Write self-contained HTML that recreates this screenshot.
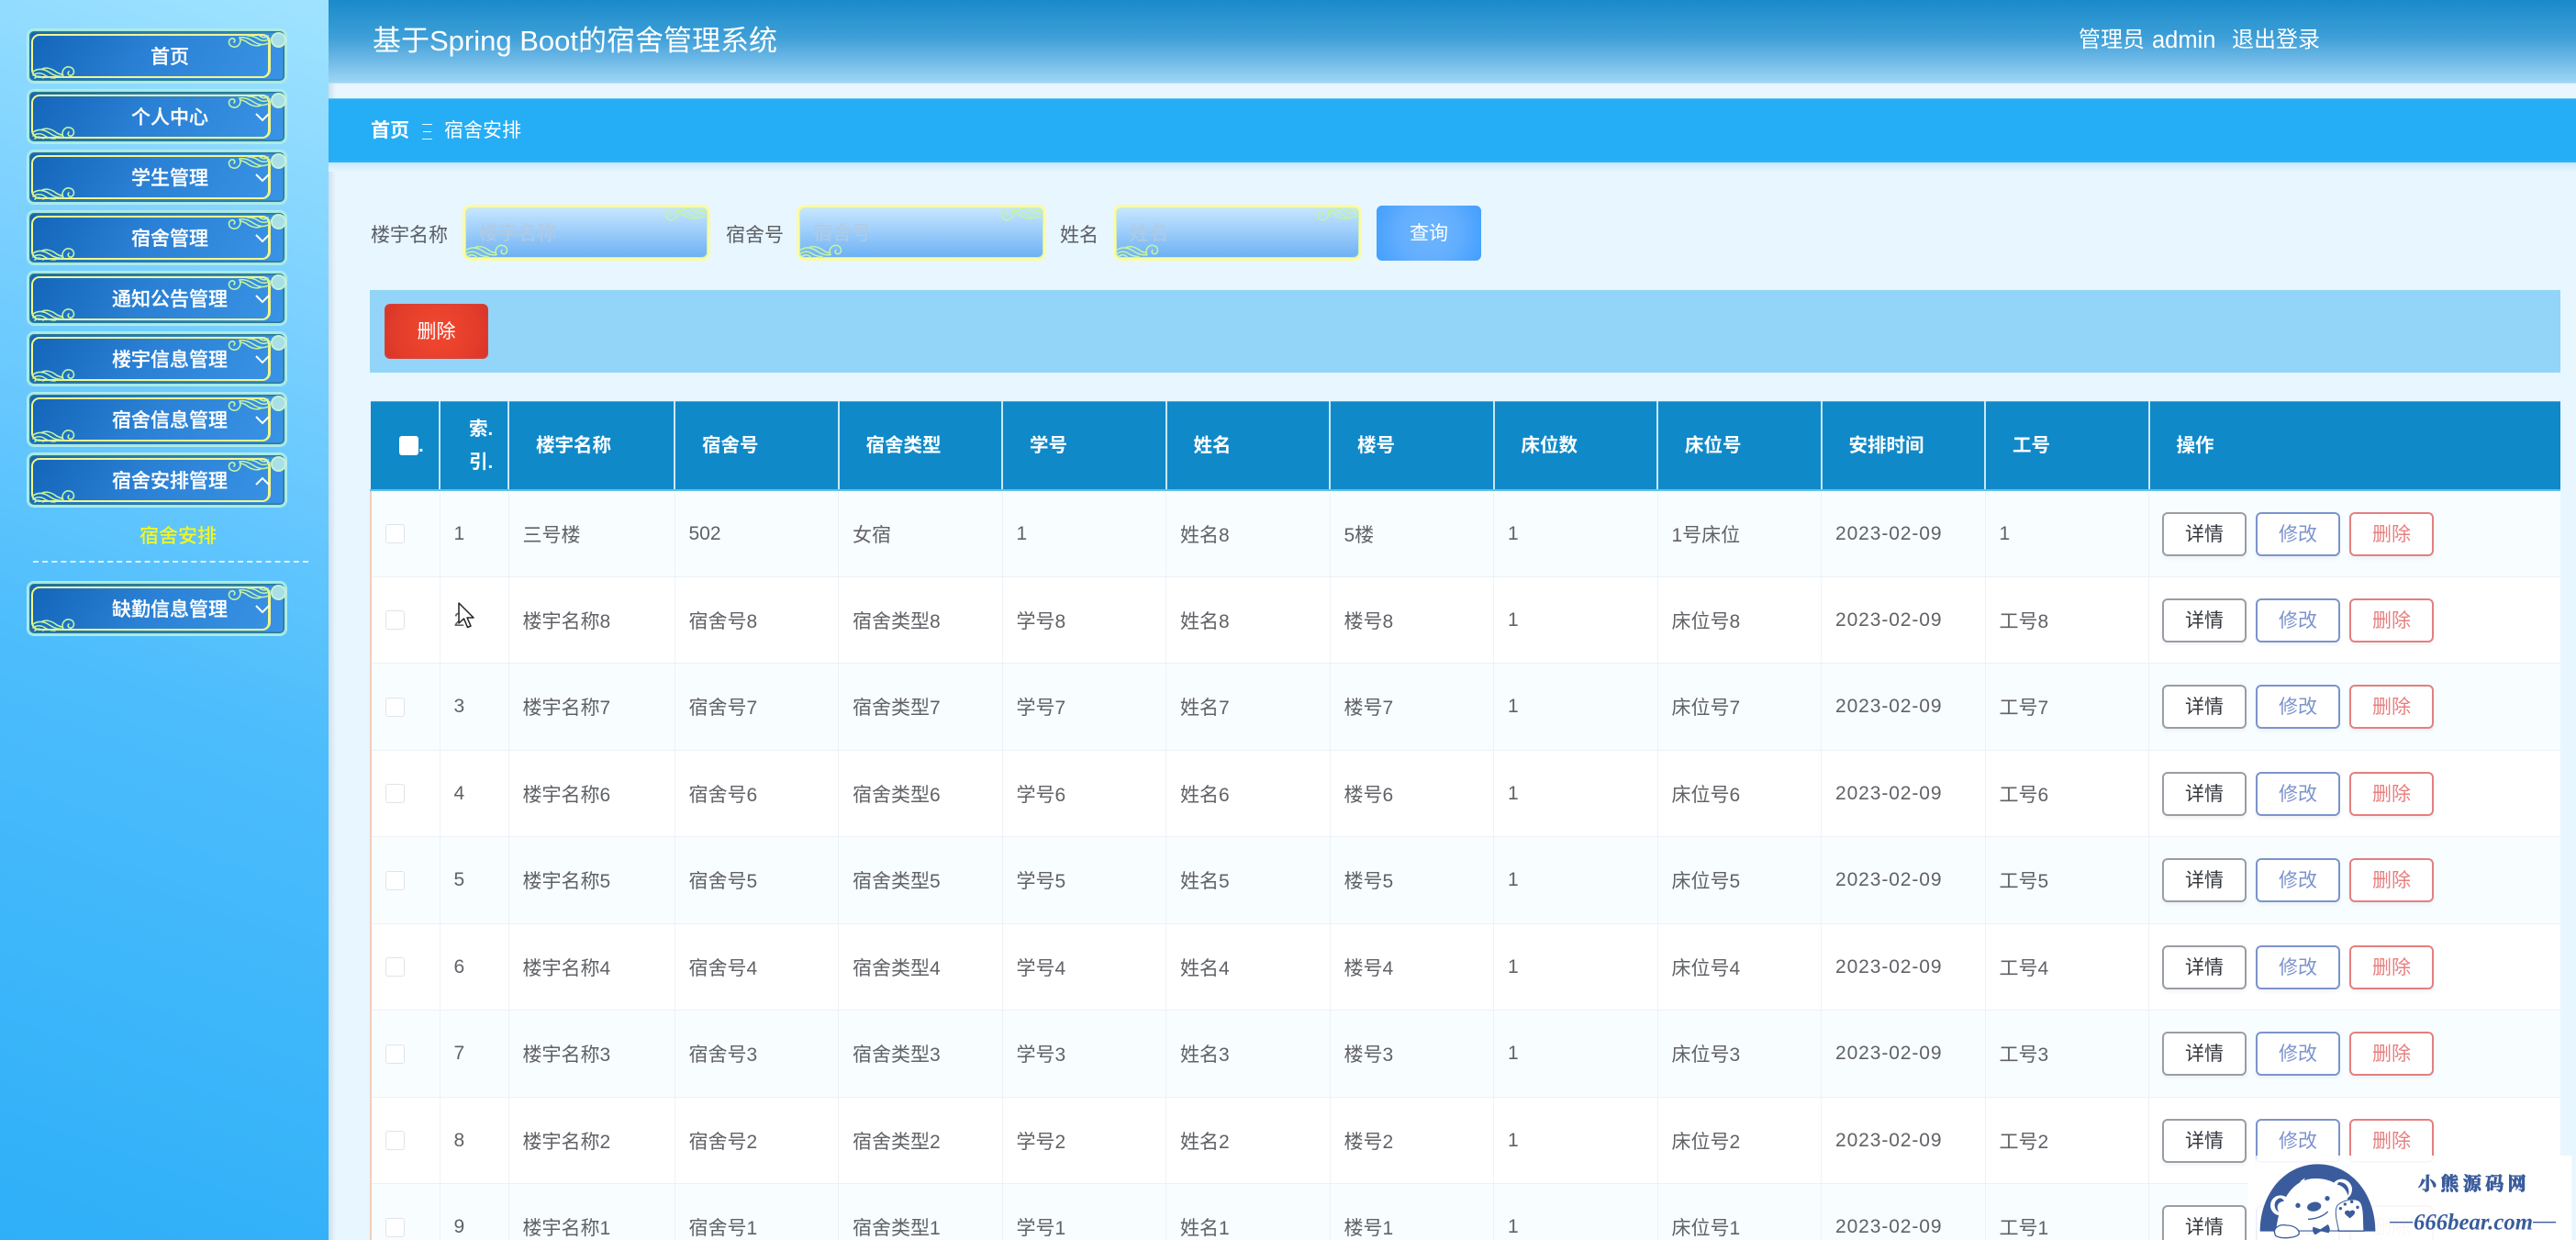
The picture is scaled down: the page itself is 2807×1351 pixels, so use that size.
<!DOCTYPE html>
<html lang="zh">
<head>
<meta charset="utf-8">
<title>基于Spring Boot的宿舍管理系统</title>
<style>
html,body{margin:0;padding:0;width:2807px;height:1351px;overflow:hidden;background:#e8f6ff;font-family:"Liberation Sans","Noto Sans CJK SC",sans-serif;}
*{box-sizing:border-box;}
#root{position:absolute;left:0;top:0;width:2807px;height:1351px;overflow:hidden;background:#e8f6ff;}
.abs,.m,.in,.lb{position:absolute;}
#side{position:absolute;left:0;top:0;width:358px;height:1351px;background:linear-gradient(20deg,#2eaff8 0%,#4dbdfc 45%,#7ad0ff 75%,#a0e3ff 100%);}
#shade{position:absolute;left:358px;top:0;width:8px;height:1351px;background:linear-gradient(90deg,#cfdfe9,#e8f6ff);}
.m{left:30px;width:282px;height:58px;border-radius:7px;border:2px solid #a7eadf;background:linear-gradient(120deg,#1264b8 0%,#2a80d4 45%,#3a94e6 100%);box-shadow:inset 0 0 0 1.5px #2a7896,0 0 0 1px #b4ecf0;}
.m .f{position:absolute;left:2px;top:3px;width:261px;height:48px;border:2px solid #f2f68c;border-right-width:3px;border-radius:9px;}
.m .t{position:absolute;width:310px;text-align:center;top:14px;line-height:30px;font-size:21px;color:#fff;font-weight:500;left:-2px;-webkit-text-stroke:.25px #fff;}
.m .c{position:absolute;left:263px;top:1px;width:17px;height:17px;border-radius:50%;background:#a9dfe6;border:2px solid #c8f2d6;}
.m .a{position:absolute;left:245px;top:22px;}
.m .o1{position:absolute;left:3px;top:38px;width:48px;height:14px;}
.m .o2{position:absolute;left:215px;top:4px;width:48px;height:14px;transform:rotate(180deg);}
.in{top:223px;height:61px;border:3px solid #fbfba2;border-radius:9px;background:linear-gradient(180deg,#c8e6ff 0%,#9fcffb 45%,#6cb0f3 100%);box-shadow:inset 0 0 0 1px #cfeec0;color:#b4c9df;font-size:21px;line-height:57px;padding-left:15px;overflow:hidden;}
.in svg{position:absolute;width:48px;height:15px;}
.in .o1{left:0;bottom:0;}
.in .o2{right:0;top:0;transform:rotate(180deg);}
.lb{top:242px;line-height:30px;font-size:21px;color:#5a5e66;}
#tb{position:absolute;left:403px;top:437px;width:2386px;border-collapse:collapse;table-layout:fixed;}
#tb th{height:96px;background:#1089c9;color:#fff;font-size:20.5px;font-weight:700;text-align:left;padding:2px 0 0 29px;line-height:36px;border-right:2px solid #c8e8f4;border-top:1px solid #7f98a8;border-bottom:2px solid #5fc0e8;}
#tb th:last-child{border-right:0;}
#tb td{height:94.5px;padding:1px 0 0 15px;font-size:21px;color:#606266;border-right:1px solid #eef2f6;border-bottom:1px solid #edf1f6;white-space:nowrap;}
#tb td.d{letter-spacing:.9px;}
#tb tr:nth-child(odd) td{background:#f8fdff;}
#tb tr:nth-child(even) td{background:#fff;}
#tb td:first-child{border-left:2px solid #f1cdc0;padding-left:15px;}
#tb td:last-child{border-right:0;padding-left:14px;}
.ck{display:block;width:21px;height:21px;border:1.5px solid #dfe4ea;border-radius:3px;background:#fff;}
.hc{display:inline-block;width:21px;height:21px;background:#fff;border-radius:3px;vertical-align:-4px;}
.b{display:inline-block;width:92px;height:48px;line-height:46px;text-align:center;border:2px solid;border-radius:6px;background:#fff;font-size:21px;margin-right:10px;box-shadow:0 3px 3px rgba(120,130,150,.08);}
.b1{border-color:#9a9da3;color:#35383e;}
.b2{border-color:#7c93cc;color:#7c93cc;}
.b3{border-color:#e47f80;color:#e87f7f;}
</style>
</head>
<body>
<div id="root">
<svg width="0" height="0" style="position:absolute">
<symbol id="cl" viewBox="0 0 48 14"><g fill="none" stroke="#c2f3a6" stroke-width="1.6" stroke-linecap="round"><path d="M1 6C7 2 13 3 19 7C23 10 29 12 34 11C31 5 36 0 41 1C46 2 47 8 43 10C40 11 38 8 40 6"/><path d="M1 10C5 7 10 7 14 10C17 12 20 13 25 13"/><path d="M3 13C6 10 9 11 12 13"/><path d="M11 3C16 1 22 3 27 7C29 8 31 9 33 9"/></g></symbol>
</svg>

<div id="side"></div>
<div id="shade"></div>

<!-- sidebar menu -->
<div class="m" style="top:32px"><div class="f"></div><svg class="o1"><use href="#cl"/></svg><svg class="o2"><use href="#cl"/></svg><div class="c"></div><div class="t">首页</div></div>
<div class="m" style="top:98px"><div class="f"></div><svg class="o1"><use href="#cl"/></svg><svg class="o2"><use href="#cl"/></svg><div class="c"></div><div class="t">个人中心</div><svg class="a" width="18" height="12"><path d="M2 2L9 9L16 2" fill="none" stroke="#fff" stroke-width="2"/></svg></div>
<div class="m" style="top:164px"><div class="f"></div><svg class="o1"><use href="#cl"/></svg><svg class="o2"><use href="#cl"/></svg><div class="c"></div><div class="t">学生管理</div><svg class="a" width="18" height="12"><path d="M2 2L9 9L16 2" fill="none" stroke="#fff" stroke-width="2"/></svg></div>
<div class="m" style="top:230px"><div class="f"></div><svg class="o1"><use href="#cl"/></svg><svg class="o2"><use href="#cl"/></svg><div class="c"></div><div class="t">宿舍管理</div><svg class="a" width="18" height="12"><path d="M2 2L9 9L16 2" fill="none" stroke="#fff" stroke-width="2"/></svg></div>
<div class="m" style="top:296px"><div class="f"></div><svg class="o1"><use href="#cl"/></svg><svg class="o2"><use href="#cl"/></svg><div class="c"></div><div class="t">通知公告管理</div><svg class="a" width="18" height="12"><path d="M2 2L9 9L16 2" fill="none" stroke="#fff" stroke-width="2"/></svg></div>
<div class="m" style="top:362px"><div class="f"></div><svg class="o1"><use href="#cl"/></svg><svg class="o2"><use href="#cl"/></svg><div class="c"></div><div class="t">楼宇信息管理</div><svg class="a" width="18" height="12"><path d="M2 2L9 9L16 2" fill="none" stroke="#fff" stroke-width="2"/></svg></div>
<div class="m" style="top:428px"><div class="f"></div><svg class="o1"><use href="#cl"/></svg><svg class="o2"><use href="#cl"/></svg><div class="c"></div><div class="t">宿舍信息管理</div><svg class="a" width="18" height="12"><path d="M2 2L9 9L16 2" fill="none" stroke="#fff" stroke-width="2"/></svg></div>
<div class="m" style="top:494px"><div class="f"></div><svg class="o1"><use href="#cl"/></svg><svg class="o2"><use href="#cl"/></svg><div class="c"></div><div class="t">宿舍安排管理</div><svg class="a" width="18" height="12"><path d="M2 10L9 3L16 10" fill="none" stroke="#fff" stroke-width="2"/></svg></div>
<div class="abs" style="left:110px;width:168px;top:570px;text-align:center;line-height:30px;font-size:21px;font-weight:500;color:#f4f61e;">宿舍安排</div>
<div class="abs" style="left:36px;top:611px;width:300px;border-top:2px dashed #d8f2ff;"></div>
<div class="m" style="top:634px"><div class="f"></div><svg class="o1"><use href="#cl"/></svg><svg class="o2"><use href="#cl"/></svg><div class="c"></div><div class="t">缺勤信息管理</div><svg class="a" width="18" height="12"><path d="M2 2L9 9L16 2" fill="none" stroke="#fff" stroke-width="2"/></svg></div>

<!-- header -->
<div class="abs" style="left:358px;top:0;width:2449px;height:91px;background:linear-gradient(180deg,#1a8aca 0%,#3d9fd7 45%,#6db8e6 72%,#9ed5f4 100%);border-bottom:1px solid #b4e0f7;"></div>
<div class="abs" style="left:406px;top:24px;line-height:42px;font-size:31px;color:#fff;white-space:nowrap;">基于Spring Boot的宿舍管理系统</div>
<div class="abs" style="left:2265px;top:28px;line-height:32px;font-size:24px;color:#fff;white-space:nowrap;">管理员</div>
<div class="abs" style="left:2345px;top:28px;line-height:32px;font-size:25.5px;color:#fff;white-space:nowrap;">admin</div>
<div class="abs" style="left:2432px;top:28px;line-height:32px;font-size:24px;color:#fff;white-space:nowrap;">退出登录</div>

<!-- breadcrumb -->
<div class="abs" style="left:358px;top:107px;width:2449px;height:70px;background:#25aef5;border-top:1px solid #66c8ee;border-bottom:2px solid #2fb2f5;"></div>
<div class="abs" style="left:358px;top:177px;width:2449px;height:10px;background:linear-gradient(180deg,#c6e6fa,#e8f6ff);"></div>
<div class="abs" style="left:404px;top:128px;line-height:30px;font-size:21px;font-weight:700;color:#fff;">首页</div>
<div class="abs" style="left:460px;top:135px;width:11px;height:17px;border-top:1.5px solid #e8f8ff;border-bottom:1.5px solid #e8f8ff;"></div>
<div class="abs" style="left:461px;top:143px;width:9px;border-top:1.5px solid #e8f8ff;"></div>
<div class="abs" style="left:484px;top:128px;line-height:30px;font-size:21px;color:#fff;">宿舍安排</div>

<!-- search -->
<div class="lb" style="left:404px">楼宇名称</div>
<div class="in" style="left:504px;width:270px">楼宇名称<svg class="o1"><use href="#cl"/></svg><svg class="o2"><use href="#cl"/></svg></div>
<div class="lb" style="left:791px">宿舍号</div>
<div class="in" style="left:868px;width:272px">宿舍号<svg class="o1"><use href="#cl"/></svg><svg class="o2"><use href="#cl"/></svg></div>
<div class="lb" style="left:1155px">姓名</div>
<div class="in" style="left:1213px;width:271px">姓名<svg class="o1"><use href="#cl"/></svg><svg class="o2"><use href="#cl"/></svg></div>
<div class="abs" style="left:1500px;top:224px;width:114px;height:60px;border-radius:6px;background:radial-gradient(circle at 50% 50%,#6cb5ff 0%,#63aefe 50%,#419ffe 100%);color:#fff;font-size:21px;text-align:center;line-height:62px;">查询</div>

<!-- toolbar -->
<div class="abs" style="left:403px;top:316px;width:2387px;height:90px;background:#93d5f9;"></div>
<div class="abs" style="left:419px;top:331px;width:113px;height:60px;border-radius:6px;background:radial-gradient(circle at 50% 50%,#f2482f 0%,#e33d2b 70%,#d8352a 100%);border:1px solid #d3443a;color:#fff;font-size:21px;text-align:center;line-height:60px;">删除</div>

<!-- table -->
<table id="tb">
<colgroup><col style="width:75px"><col style="width:75px"><col style="width:181px"><col style="width:178.5px"><col style="width:178.5px"><col style="width:178.5px"><col style="width:178.5px"><col style="width:178.5px"><col style="width:178.5px"><col style="width:178.5px"><col style="width:178.5px"><col style="width:178.5px"><col style="width:448.5px"></colgroup>
<thead><tr><th style="padding-left:31px"><span class="hc"></span>.</th><th style="padding-left:31px">索.<br>引.</th><th>楼宇名称</th><th>宿舍号</th><th>宿舍类型</th><th>学号</th><th>姓名</th><th>楼号</th><th>床位数</th><th>床位号</th><th>安排时间</th><th>工号</th><th>操作</th></tr></thead>
<tbody>
<tr><td><span class="ck"></span></td><td>1</td><td>三号楼</td><td>502</td><td>女宿</td><td>1</td><td>姓名8</td><td>5楼</td><td>1</td><td>1号床位</td><td class="d">2023-02-09</td><td>1</td><td><span class="b b1">详情</span><span class="b b2">修改</span><span class="b b3">删除</span></td></tr>
<tr><td><span class="ck"></span></td><td>2</td><td>楼宇名称8</td><td>宿舍号8</td><td>宿舍类型8</td><td>学号8</td><td>姓名8</td><td>楼号8</td><td>1</td><td>床位号8</td><td class="d">2023-02-09</td><td>工号8</td><td><span class="b b1">详情</span><span class="b b2">修改</span><span class="b b3">删除</span></td></tr>
<tr><td><span class="ck"></span></td><td>3</td><td>楼宇名称7</td><td>宿舍号7</td><td>宿舍类型7</td><td>学号7</td><td>姓名7</td><td>楼号7</td><td>1</td><td>床位号7</td><td class="d">2023-02-09</td><td>工号7</td><td><span class="b b1">详情</span><span class="b b2">修改</span><span class="b b3">删除</span></td></tr>
<tr><td><span class="ck"></span></td><td>4</td><td>楼宇名称6</td><td>宿舍号6</td><td>宿舍类型6</td><td>学号6</td><td>姓名6</td><td>楼号6</td><td>1</td><td>床位号6</td><td class="d">2023-02-09</td><td>工号6</td><td><span class="b b1">详情</span><span class="b b2">修改</span><span class="b b3">删除</span></td></tr>
<tr><td><span class="ck"></span></td><td>5</td><td>楼宇名称5</td><td>宿舍号5</td><td>宿舍类型5</td><td>学号5</td><td>姓名5</td><td>楼号5</td><td>1</td><td>床位号5</td><td class="d">2023-02-09</td><td>工号5</td><td><span class="b b1">详情</span><span class="b b2">修改</span><span class="b b3">删除</span></td></tr>
<tr><td><span class="ck"></span></td><td>6</td><td>楼宇名称4</td><td>宿舍号4</td><td>宿舍类型4</td><td>学号4</td><td>姓名4</td><td>楼号4</td><td>1</td><td>床位号4</td><td class="d">2023-02-09</td><td>工号4</td><td><span class="b b1">详情</span><span class="b b2">修改</span><span class="b b3">删除</span></td></tr>
<tr><td><span class="ck"></span></td><td>7</td><td>楼宇名称3</td><td>宿舍号3</td><td>宿舍类型3</td><td>学号3</td><td>姓名3</td><td>楼号3</td><td>1</td><td>床位号3</td><td class="d">2023-02-09</td><td>工号3</td><td><span class="b b1">详情</span><span class="b b2">修改</span><span class="b b3">删除</span></td></tr>
<tr><td><span class="ck"></span></td><td>8</td><td>楼宇名称2</td><td>宿舍号2</td><td>宿舍类型2</td><td>学号2</td><td>姓名2</td><td>楼号2</td><td>1</td><td>床位号2</td><td class="d">2023-02-09</td><td>工号2</td><td><span class="b b1">详情</span><span class="b b2">修改</span><span class="b b3">删除</span></td></tr>
<tr><td><span class="ck"></span></td><td>9</td><td>楼宇名称1</td><td>宿舍号1</td><td>宿舍类型1</td><td>学号1</td><td>姓名1</td><td>楼号1</td><td>1</td><td>床位号1</td><td class="d">2023-02-09</td><td>工号1</td><td><span class="b b1">详情</span><span class="b b2">修改</span><span class="b b3">删除</span></td></tr>
</tbody>
</table>

<!-- mouse cursor -->
<svg class="abs" style="left:498px;top:655px" width="24" height="32" viewBox="0 0 24 32"><path d="M2 2V24L7.5 19L11.5 28.5L15 27L11 18H18Z" fill="#fff" stroke="#222" stroke-width="1.5" stroke-linejoin="round"/></svg>

<!-- watermark -->
<svg class="abs" style="left:2400px;top:1200px" width="407" height="151" viewBox="0 0 1221 453">
<rect x="175" y="177" width="1032" height="276" fill="#fff" opacity=".93"/>
<rect x="148" y="265" width="27" height="188" fill="#fff" opacity=".93"/>
<path d="M188 425C188 300 270 205 377 205C484 205 565 300 565 425Z" fill="#3a5c9c"/>
<circle cx="255" cy="340" r="33" fill="#fff"/><path d="M252 316C232 322 230 352 250 362C240 345 245 328 268 326C264 320 258 316 252 316Z" fill="#3a5c9c"/>
<circle cx="455" cy="288" r="34" fill="#fff"/><path d="M445 264C470 262 484 285 476 308C470 290 460 276 440 272Z" fill="#3a5c9c"/>
<path d="M240 425C250 330 290 255 365 252C430 250 470 285 480 340L440 425Z" fill="#fff"/>
<path d="M318 262L335 250L330 265" fill="#fff"/>
<circle cx="312" cy="340" r="8" fill="#3a5c9c"/><circle cx="408" cy="317" r="8" fill="#3a5c9c"/>
<ellipse cx="365" cy="344" rx="23" ry="15" fill="#3a5c9c" transform="rotate(-10 365 344)"/>
<path d="M345 385C370 385 395 375 410 360" fill="none" stroke="#3a5c9c" stroke-width="4"/>
<path d="M446 424C440 395 430 360 440 342C450 325 500 312 515 328C530 345 525 395 528 424Z" fill="#fff" stroke="#3a5c9c" stroke-width="3"/>
<circle cx="451" cy="350" r="5" fill="#3a5c9c"/><circle cx="466" cy="336" r="5" fill="#3a5c9c"/><circle cx="488" cy="328" r="5" fill="#3a5c9c"/><circle cx="507" cy="346" r="5" fill="#3a5c9c"/>
<path d="M482 382C470 372 462 368 466 360C472 354 480 356 482 360C486 354 494 354 498 360C500 368 492 374 482 382Z" fill="#3a5c9c"/>
<path d="M240 440C225 415 250 400 275 405C300 405 320 420 315 435C300 447 260 450 240 440Z" fill="#fff" stroke="#3a5c9c" stroke-width="4"/>
<path d="M362 410L385 418L410 402C418 412 418 424 412 430L388 424L368 436C360 428 358 418 362 410Z" fill="#3a5c9c"/>
<path d="M315 423H565" stroke="#3a5c9c" stroke-width="3"/>
<text x="705" y="290" font-size="60" font-weight="700" fill="#3a5c9c" stroke="#3a5c9c" stroke-width="2.5" textLength="353" font-family="'Noto Serif CJK SC','Liberation Serif',serif">小熊源码网</text>
<path d="M612 395H688M1080 395H1155" stroke="#3a5c9c" stroke-width="4"/>
<text x="690" y="418" font-size="76" font-weight="700" font-style="italic" fill="#3a5c9c" textLength="390" lengthAdjust="spacingAndGlyphs" font-family="'Liberation Serif',serif">666bear.com</text>
</svg>
</div>
</body>
</html>
